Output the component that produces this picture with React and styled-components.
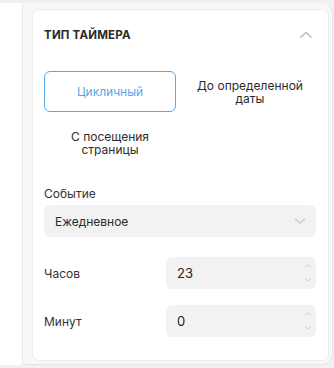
import React, { useState } from "react";
import styled, { createGlobalStyle } from "styled-components";

const GlobalStyle = createGlobalStyle`
  html, body {
    margin: 0;
    padding: 0;
    background: #f1f1f1;
    font-family: Inter, "Noto Sans", sans-serif;
  }
  * { box-sizing: border-box; }
`;

const timerTypes = [
  { id: "cyclic", label: "Цикличный" },
  { id: "date", label: "До определенной даты" },
  { id: "visit", label: "С посещения страницы" },
];

const Chevron = ({ up, size = 14, color = "#b4b4b4" }) => (
  <svg width={size} height={size} viewBox="0 0 14 14" fill="none">
    <path
      d={up ? "M2.5 9L7 4.8L11.5 9" : "M2.5 5L7 9.2L11.5 5"}
      stroke={color}
      strokeWidth="1.1"
      strokeLinecap="round"
      strokeLinejoin="round"
    />
  </svg>
);

function NumberField({ label, value }) {
  return (
    <FieldRow>
      <RowLabel>{label}</RowLabel>
      <NumberBox>
        <NumberValue>{value}</NumberValue>
        <Spinner>
          <Chevron up size={8} color="#b0b0b0" />
          <Chevron size={8} color="#b0b0b0" />
        </Spinner>
      </NumberBox>
    </FieldRow>
  );
}

export default function App() {
  const [active, setActive] = useState("cyclic");

  return (
    <>
      <GlobalStyle />
      <Screen>
        <Sidebar />
        <Main>
          <Card>
            <Header>
              <Title>Тип таймера</Title>
              <Chevron up size={16} color="#b8b8b8" />
            </Header>

            <TypeGrid>
              {timerTypes.map((t) => (
                <TypeOption
                  key={t.id}
                  $active={active === t.id}
                  onClick={() => setActive(t.id)}
                >
                  {t.label}
                </TypeOption>
              ))}
            </TypeGrid>

            <FieldLabel>Событие</FieldLabel>
            <Select>
              <span>Ежедневное</span>
              <Chevron size={14} color="#c4c4c4" />
            </Select>

            <NumberList>
              <NumberField label="Часов" value="23" />
              <NumberField label="Минут" value="0" />
            </NumberList>
          </Card>
        </Main>
      </Screen>
    </>
  );
}

// ---------------- Styled Components ----------------
const Screen = styled.div`
  display: flex;
  height: 368px;
  padding: 3px 1px 3px 0;
`;

const Sidebar = styled.div`
  width: 23px;
  flex-shrink: 0;
  background: #fff;
  border-right: 1px solid #e8e8e8;
`;

const Main = styled.div`
  flex: 1;
  background: #f8f8f8;
  border-right: 1px solid #e6e6e6;
  border-bottom: 1px solid #e6e6e6;
  border-radius: 0 10px 10px 0;
  padding: 6px 3px 3px 9px;
`;

const Card = styled.div`
  height: 100%;
  background: #fff;
  border: 1px solid #ebebeb;
  border-radius: 7px;
  padding: 0 12px 0 11px;
`;

const Header = styled.div`
  display: flex;
  align-items: center;
  justify-content: space-between;
  height: 47px;
  padding-top: 2px;
  padding-right: 2px;
`;

const Title = styled.h3`
  margin: 0;
  font-size: 11.5px;
  font-weight: 700;
  letter-spacing: 0.2px;
  text-transform: uppercase;
  color: #2a2a2a;
`;

const TypeGrid = styled.div`
  display: grid;
  grid-template-columns: 1fr 1fr;
  grid-auto-rows: 41px;
  gap: 10px 8px;
  margin-top: 14px;
`;

const TypeOption = styled.button`
  display: flex;
  align-items: center;
  justify-content: center;
  padding: 0 4px;
  background: #fff;
  border: 1px solid ${(p) => (p.$active ? "#55a7f2" : "transparent")};
  border-radius: 6px;
  font-family: inherit;
  font-size: 12px;
  line-height: 13px;
  color: ${(p) => (p.$active ? "#5aa5ec" : "#2b2b2b")};
  text-align: center;
  cursor: pointer;
`;

const FieldLabel = styled.div`
  margin-top: 23px;
  font-size: 12px;
  color: #333;
`;

const Select = styled.div`
  display: flex;
  align-items: center;
  justify-content: space-between;
  height: 32px;
  margin-top: 4px;
  padding: 0 9px 0 11px;
  background: #f2f2f2;
  border-radius: 6px;
  font-size: 12px;
  color: #2b2b2b;
`;

const NumberList = styled.div`
  display: flex;
  flex-direction: column;
  gap: 16px;
  margin-top: 20px;
`;

const FieldRow = styled.div`
  display: flex;
  align-items: center;
  justify-content: space-between;
`;

const RowLabel = styled.span`
  font-size: 12px;
  color: #333;
`;

const NumberBox = styled.div`
  display: flex;
  align-items: center;
  justify-content: space-between;
  width: 150px;
  height: 32px;
  padding: 0 4px 0 11px;
  background: #f2f2f2;
  border-radius: 6px;
`;

const NumberValue = styled.span`
  font-size: 13px;
  color: #222;
`;

const Spinner = styled.div`
  display: flex;
  flex-direction: column;
  gap: 6px;
`;
